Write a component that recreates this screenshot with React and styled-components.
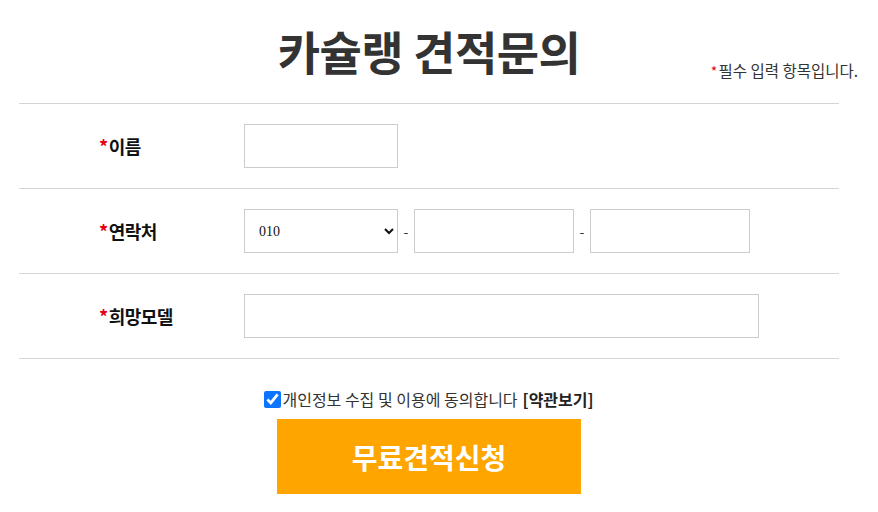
import styled, { createGlobalStyle } from 'styled-components';

const GlobalStyle = createGlobalStyle`
  body {
    margin: 0;
    background: #fff;
    font-family: "Noto Sans CJK KR", "Noto Sans", sans-serif;
    color: #333;
  }
`;

const Wrap = styled.div`
  width: 820px;
  margin-left: 19px;
`;

const Header = styled.div`
  position: relative;
  height: 103px;
  display: flex;
  justify-content: center;
`;

const Title = styled.h1`
  margin: 0;
  padding-top: 17px;
  font-size: 46px;
  font-weight: 700;
  line-height: 66px;
  color: #333;
  letter-spacing: -0.5px;
`;

const Note = styled.p`
  position: absolute;
  right: -19px;
  top: 58px;
  margin: 0;
  font-size: 15.5px;
  line-height: 24px;
  color: #333;
`;

const Star = styled.span`
  color: #e60012;
  font-size: ${p => p.$size || '14px'};
  margin-right: 1px;
`;

const Row = styled.div`
  display: grid;
  grid-template-columns: 225px 1fr;
  align-items: center;
  height: 84px;
  border-top: 1px solid #d5d5d5;
  &:last-of-type {
    border-bottom: 1px solid #d5d5d5;
  }
`;

const Label = styled.div`
  padding-left: 80px;
  font-size: 18px;
  font-weight: 700;
  color: #111;
  letter-spacing: -0.5px;
`;

const Field = styled.div`
  display: flex;
  align-items: center;
`;

const Input = styled.input`
  box-sizing: border-box;
  width: ${p => p.$w}px;
  height: 44px;
  border: 1px solid #ccc;
  outline: none;
  padding: 0 8px;
  font-size: 14px;
  background: #fff;
`;

const Select = styled.select`
  box-sizing: border-box;
  width: 154px;
  height: 44px;
  border: 1px solid #ccc;
  padding: 0 8px 0 10px;
  font-family: "Liberation Serif", serif;
  font-size: 14px;
  color: #111;
  background: #fff;
  outline: none;
`;

const Dash = styled.span`
  width: 16px;
  text-align: center;
  font-size: 14px;
  color: #333;
`;

const Agree = styled.label`
  display: flex;
  justify-content: center;
  align-items: center;
  margin-top: 29px;
  font-size: 16px;
  color: #333;
  line-height: 22px;
  input {
    width: 17px;
    height: 17px;
    margin: 0 1px 0 0;
    accent-color: #0b75ff;
  }
  b {
    margin-left: 5px;
    font-weight: 700;
    color: #222;
  }
`;

const Submit = styled.button`
  display: block;
  margin: 9px auto 0;
  width: 304px;
  height: 75px;
  border: none;
  background: #ffa500;
  color: #fff;
  font-family: "Noto Sans CJK KR", sans-serif;
  font-size: 28px;
  font-weight: 700;
  cursor: pointer;
`;

export default function App() {
  return (
    <Wrap>
      <GlobalStyle />
      <Header>
        <Title>카슐랭 견적문의</Title>
        <Note><Star>*</Star>필수 입력 항목입니다.</Note>
      </Header>
      <form>
        <Row>
          <Label><Star $size="18px">*</Star>이름</Label>
          <Field><Input $w={154} /></Field>
        </Row>
        <Row>
          <Label><Star $size="18px">*</Star>연락처</Label>
          <Field>
            <Select defaultValue="010">
              <option>010</option>
              <option>011</option>
              <option>016</option>
              <option>017</option>
            </Select>
            <Dash>-</Dash>
            <Input $w={160} />
            <Dash>-</Dash>
            <Input $w={160} />
          </Field>
        </Row>
        <Row>
          <Label><Star $size="18px">*</Star>희망모델</Label>
          <Field><Input $w={515} /></Field>
        </Row>
      </form>
      <Agree>
        <input type="checkbox" defaultChecked />
        개인정보 수집 및 이용에 동의합니다<b>[약관보기]</b>
      </Agree>
      <Submit type="button">무료견적신청</Submit>
    </Wrap>
  );
}
